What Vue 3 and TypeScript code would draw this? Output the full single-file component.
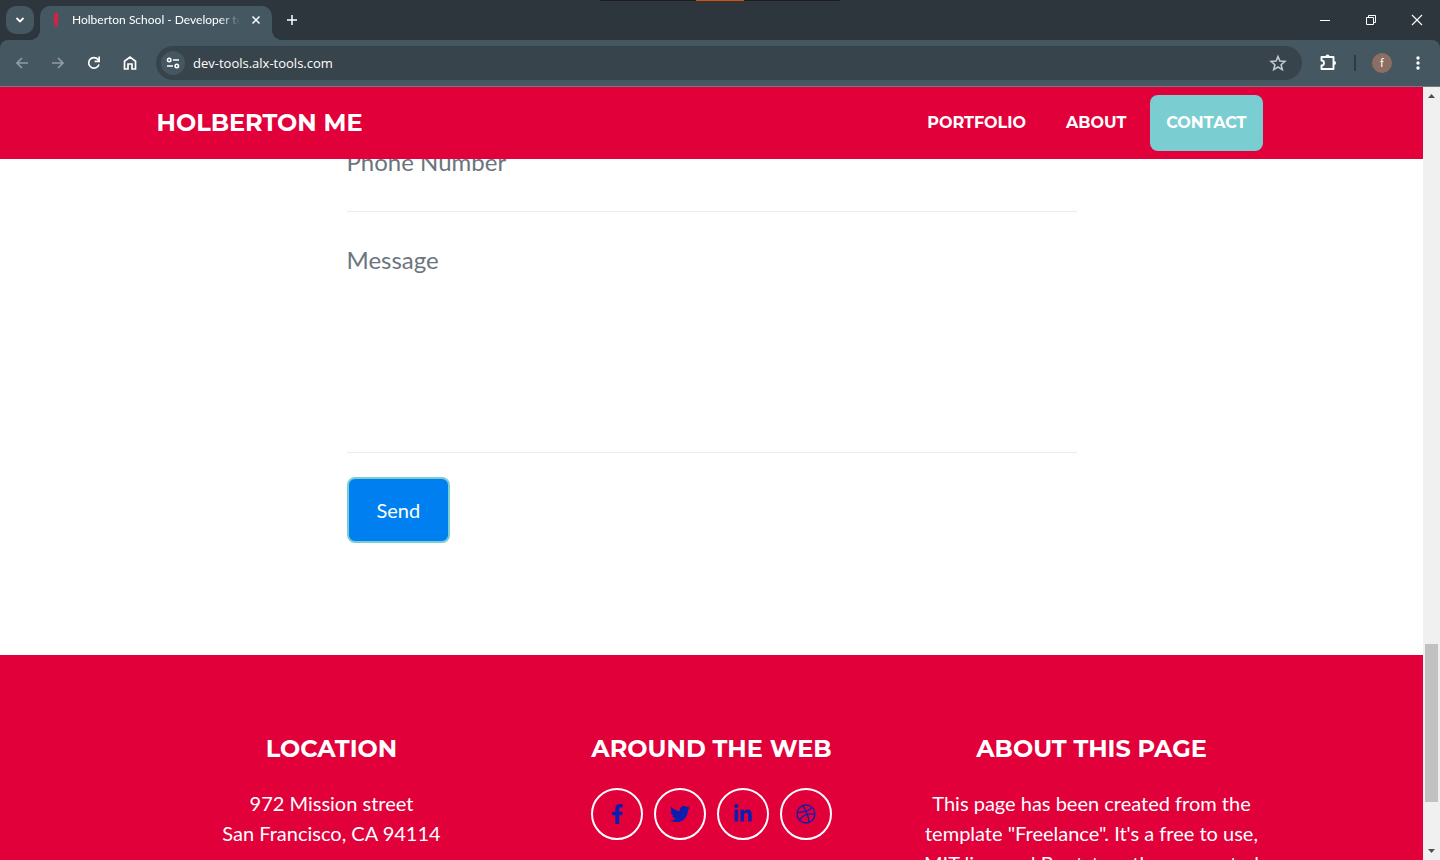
<script setup lang="ts">
import { ref } from 'vue'

interface NavItem { label: string; href: string; active: boolean }
interface Social { name: string; viewBox: string; width: number; path: string }

const navItems: NavItem[] = [
  { label: 'Portfolio', href: '#portfolio', active: false },
  { label: 'About', href: '#about', active: false },
  { label: 'Contact', href: '#contact', active: true },
]

const socials: Social[] = [
  {
    name: 'Facebook',
    viewBox: '0 0 320 512',
    width: 13,
    path: 'M279.14 288l14.22-92.66h-88.91v-60.13c0-25.35 12.42-50.06 52.24-50.06h40.42V6.26S260.43 0 225.36 0c-73.22 0-121.08 44.38-121.08 124.72v70.62H22.89V288h81.39v224h100.17V288z',
  },
  {
    name: 'Twitter',
    viewBox: '0 0 512 512',
    width: 20,
    path: 'M459.37 151.716c.325 4.548.325 9.097.325 13.645 0 138.72-105.583 298.558-298.558 298.558-59.452 0-114.68-17.219-161.137-47.106 8.447.974 16.568 1.299 25.34 1.299 49.055 0 94.213-16.568 130.274-44.832-46.132-.975-84.792-31.188-98.112-72.772 6.498.974 12.995 1.624 19.818 1.624 9.421 0 18.843-1.3 27.614-3.573-48.081-9.747-84.143-51.98-84.143-102.985v-1.299c13.969 7.797 30.214 12.67 47.431 13.319-28.264-18.843-46.781-51.005-46.781-87.391 0-19.492 5.197-37.36 14.294-52.954 51.655 63.675 129.3 105.258 216.365 109.807-1.624-7.797-2.599-15.918-2.599-24.04 0-57.828 46.782-104.934 104.934-104.934 30.213 0 57.502 12.67 76.67 33.137 23.715-4.548 46.456-13.32 66.599-25.34-7.798 24.366-24.366 44.833-46.132 57.827 21.117-2.273 41.584-8.122 60.426-16.243-14.292 20.791-32.161 39.308-52.628 54.253z',
  },
  {
    name: 'LinkedIn',
    viewBox: '0 0 448 512',
    width: 18,
    path: 'M100.28 448H7.4V148.9h92.88zM53.79 108.1C24.09 108.1 0 83.5 0 53.8a53.79 53.79 0 0 1 107.58 0c0 29.7-24.1 54.3-53.79 54.3zM447.9 448h-92.68V302.4c0-34.7-.7-79.2-48.29-79.2-48.29 0-55.69 37.7-55.69 76.7V448h-92.78V148.9h89.08v40.8h1.3c12.4-23.5 42.69-48.3 87.88-48.3 94 0 111.28 61.9 111.28 142.3V448z',
  },
]

const address = ref('dev-tools.alx-tools.com')
const phone = ref('')
const message = ref('')
</script>

<template>
  <div class="window">
    <header class="chrome">
      <div class="tabstrip">
        <button class="tab-search" aria-label="Search tabs">
          <svg width="10" height="10" viewBox="0 0 10 10"><path d="M1.5 3l3.5 3.5L8.5 3" fill="none" stroke="#fff" stroke-width="1.800" /></svg>
        </button>
        <div class="tab">
          <svg class="favicon" width="8" height="16" viewBox="0 0 8 16" aria-hidden="true">
            <path d="M3.500 1L5.200.6 6.200 2.500 5.800 4.600 4.600 5.400 6.200 7 6 9.200 4.600 10.400 6 11.600 5.800 13.800 4 15 2 14 2.200 12.600 3.800 13.400 4.300 12.300 2.800 11.200 2.800 10 1.200 9.400 2.500 8.600 1.400 7.200 2.800 6.600 3 5 1 4.200 3.200 3z" fill="#ee1840" />
          </svg>
          <span class="tab-title">Holberton School - Developer tools</span>
          <button class="tab-close" aria-label="Close tab">
            <svg width="10" height="10" viewBox="0 0 10 10"><path d="M1.5 1.5l7 7m0-7l-7 7" stroke="#fff" stroke-width="1.5" /></svg>
          </button>
        </div>
        <button class="new-tab" aria-label="New tab">
          <svg width="12" height="12" viewBox="0 0 12 12"><path d="M6 1v10M1 6h10" stroke="#fff" stroke-width="1.5" /></svg>
        </button>
        <div class="progress" aria-hidden="true"><span class="progress-mark"></span></div>
        <div class="window-controls">
          <button aria-label="Minimize"><svg width="12" height="12" viewBox="0 0 12 12"><path d="M1 6.5h10" stroke="#fff" /></svg></button>
          <button aria-label="Restore"><svg width="12" height="12" viewBox="0 0 12 12"><path d="M1.5 3.5h7v7h-7zM3.5 3V1.5h7v7H9" fill="none" stroke="#fff" /></svg></button>
          <button aria-label="Close"><svg width="12" height="12" viewBox="0 0 12 12"><path d="M1 1l10 10M11 1L1 11" stroke="#fff" stroke-width="1.1" /></svg></button>
        </div>
      </div>

      <div class="toolbar">
        <button class="tool" aria-label="Back" disabled>
          <svg width="14" height="14" viewBox="0 0 14 14"><path d="M13 7H2M7 2L2 7l5 5" fill="none" stroke="#929da2" stroke-width="1.7" /></svg>
        </button>
        <button class="tool" aria-label="Forward" disabled>
          <svg width="14" height="14" viewBox="0 0 14 14"><path d="M1 7h11M7 2l5 5-5 5" fill="none" stroke="#929da2" stroke-width="1.7" /></svg>
        </button>
        <button class="tool" aria-label="Reload">
          <svg width="14" height="14" viewBox="0 0 14 14"><path d="M12 8.5A5.3 5.3 0 1 1 11 3.4L12.2 5" fill="none" stroke="#fff" stroke-width="1.7" /><path d="M13 .5v5.700H7.600V4.600h3.700V.5z" fill="#fff" /></svg>
        </button>
        <button class="tool" aria-label="Home">
          <svg width="14" height="16" viewBox="0 0 14 16"><path d="M1.5 6.2L7 2l5.500 4.200V14H9V9H5v5H1.500z" fill="none" stroke="#fff" stroke-width="1.7" /></svg>
        </button>
        <div class="omnibox">
          <button class="site-info" aria-label="View site information">
            <svg width="14" height="12" viewBox="0 0 14 12" fill="none" stroke="#fff" stroke-width="1.6"><circle cx="3.200" cy="3" r="1.700" /><path d="M7 3h6M1 9h6" /><circle cx="10.800" cy="9" r="1.700" /></svg>
          </button>
          <input v-model="address" class="address" type="text" aria-label="Address" />
          <button class="bookmark" aria-label="Bookmark this tab">
            <svg width="18" height="18" viewBox="0 0 18 18"><path d="M9 2.500l1.900 4.600 5 .4-3.800 3.200 1.200 4.900L9 13l-4.300 2.600 1.200-4.900-3.800-3.200 5-.4z" fill="none" stroke="#c3c7ca" stroke-width="1.600" /></svg>
          </button>
        </div>
        <button class="tool extensions" aria-label="Extensions">
          <svg width="18" height="18" viewBox="0 0 18 18"><path d="M2.500 3h12v12h-12v-3.500a2.500 2.500 0 0 0 0-5z" fill="none" stroke="#fff" stroke-width="1.900" stroke-linejoin="round" /><path d="M6.500 2.500a2 2 0 0 1 4 0M15 7a2 2 0 0 1 0 4" fill="#fff" /></svg>
        </button>
        <span class="divider"></span>
        <button class="profile" aria-label="Profile">f</button>
        <button class="tool menu" aria-label="Menu">
          <svg width="4" height="16" viewBox="0 0 4 16" fill="#fff"><circle cx="2" cy="3" r="1.700" /><circle cx="2" cy="8" r="1.700" /><circle cx="2" cy="13" r="1.700" /></svg>
        </button>
      </div>
    </header>

    <div class="viewport">
      <div class="page">
        <nav class="navbar">
          <div class="container navbar-inner">
            <a class="brand" href="#top">Holberton Me</a>
            <div class="nav-links">
              <a v-for="item in navItems" :key="item.label" :href="item.href" :class="['nav-link', { active: item.active }]">{{ item.label }}</a>
            </div>
          </div>
        </nav>

        <main class="contact">
          <form class="contact-form" @submit.prevent>
            <input v-model="phone" class="field" type="tel" placeholder="Phone Number" aria-label="Phone Number" />
            <textarea v-model="message" class="field message" placeholder="Message" aria-label="Message"></textarea>
            <button class="send" type="submit">Send</button>
          </form>
        </main>

        <footer class="footer">
          <div class="container columns">
            <section class="column">
              <h4>Location</h4>
              <p>972 Mission street<br />San Francisco, CA 94114</p>
            </section>
            <section class="column">
              <h4>Around the Web</h4>
              <div class="socials">
                <a v-for="s in socials" :key="s.name" class="social" href="#" :aria-label="s.name">
                  <svg :width="s.width" height="20" :viewBox="s.viewBox"><path :d="s.path" fill="currentColor" /></svg>
                </a>
                <a class="social" href="#" aria-label="Dribbble">
                  <svg width="20" height="20" viewBox="0 0 20 20" fill="none" stroke="currentColor" stroke-width="1.300"><circle cx="10" cy="10" r="9" /><path d="M6.600 1.700C9.500 5.500 11.800 10 13.300 18.300M1.200 8.300c6 .1 11.800-.9 14.900-4.900M3.700 16.200c3.200-5.200 8.500-7.400 15.200-5.700" /></svg>
                </a>
              </div>
            </section>
            <section class="column">
              <h4>About this page</h4>
              <p>This page has been created from the template "Freelance". It's a free to use, MIT licensed Bootstrap theme created</p>
            </section>
          </div>
        </footer>
      </div>

      <div class="scrollbar" aria-hidden="true">
        <svg width="17" height="17" viewBox="0 0 17 17"><path d="M5 11l3.500-4 3.500 4z" fill="#505050" /></svg>
        <span class="thumb"></span>
        <svg width="17" height="17" viewBox="0 0 17 17"><path d="M5 6l3.500 4L12 6z" fill="#505050" /></svg>
      </div>
    </div>
  </div>
</template>

<style>
html,
body {
  margin: 0;
  overflow: hidden;
}
</style>

<style scoped>
* {
  box-sizing: border-box;
}

.window {
  display: flex;
  flex-direction: column;
  height: 100vh;
  overflow: hidden;
  font-family: Lato, sans-serif;
  background: #fff;
}

button {
  display: flex;
  align-items: center;
  justify-content: center;
  padding: 0;
  border: 0;
  background: none;
  color: #fff;
}

.chrome {
  background: #2c363c;
  font-family: "Open Sans", sans-serif;
}

.tabstrip {
  position: relative;
  display: flex;
  height: 40px;
  padding: 6px 0 0 6px;
}

.tab-search {
  width: 28px;
  height: 28px;
  margin-right: 6px;
  border-radius: 10px;
  background: #455760;
}

.tab {
  position: relative;
  display: flex;
  align-items: center;
  width: 232px;
  padding: 0 8px 6px 12px;
  border-radius: 10px 10px 0 0;
  background: #455760;
}

.tab::before,
.tab::after {
  content: "";
  position: absolute;
  bottom: 0;
  width: 10px;
  height: 10px;
}

.tab::before {
  left: -10px;
  background: radial-gradient(circle at 0 0, transparent 10px, #455760 10px);
}

.tab::after {
  right: -10px;
  background: radial-gradient(circle at 100% 0, transparent 10px, #455760 10px);
}

.tab-title {
  flex: 1;
  margin-left: 12px;
  overflow: hidden;
  white-space: nowrap;
  font-family: Lato, sans-serif;
  font-size: 12px;
  line-height: 16px;
  color: #fff;
  mask-image: linear-gradient(to right, #000 88%, transparent);
}

.tab-close {
  width: 16px;
  height: 16px;
  margin-left: 8px;
}

.new-tab {
  width: 28px;
  height: 28px;
  margin-left: 6px;
}

.progress {
  position: absolute;
  top: 0;
  left: 50%;
  display: flex;
  justify-content: center;
  width: 240px;
  height: 1px;
  margin-left: -120px;
  background: #1f1c1b;
}

.progress-mark {
  width: 48px;
  background: #d1500f;
}

.window-controls {
  display: flex;
  margin: -6px 0 0 auto;
}

.window-controls button {
  width: 46px;
  height: 40px;
}

.toolbar {
  display: flex;
  align-items: center;
  height: 47px;
  padding: 0 4px;
  border-bottom: 1px solid #6f7d84;
  border-radius: 8px 8px 0 0;
  background: #455760;
}

.tool {
  width: 36px;
  height: 34px;
}

.omnibox {
  display: flex;
  flex: 1;
  align-items: center;
  height: 34px;
  margin: 0 8px;
  padding: 0 15px 0 5px;
  border-radius: 17px;
  background: #38444b;
}

.site-info {
  width: 24px;
  height: 24px;
  border-radius: 12px;
  background: #455760;
}

.address {
  flex: 1;
  height: 24px;
  margin-left: 8px;
  padding: 0;
  border: 0;
  outline: 0;
  background: none;
  color: #fff;
  font: 13px "Open Sans", sans-serif;
}

.divider {
  width: 2px;
  height: 16px;
  margin: 0 16px 0 8px;
  background: #2f3b42;
}

.profile {
  width: 20px;
  height: 20px;
  border-radius: 10px;
  background: #8d6e63;
  font: 11px Roboto, sans-serif;
}

.menu {
  margin-left: 8px;
}

.viewport {
  display: flex;
  flex: 1;
  min-height: 0;
}

.page {
  flex: 1;
  min-width: 0;
  overflow: hidden;
}

.container {
  max-width: 1140px;
  margin: 0 auto;
}

.navbar {
  position: relative;
  z-index: 1;
  padding: 8px 0;
  background: #e1003a;
}

.navbar-inner {
  display: flex;
  align-items: center;
  justify-content: space-between;
  padding: 0 15px;
}

.brand,
.nav-link,
h4 {
  font-family: Montserrat, Inter, sans-serif;
  font-weight: 700;
  text-transform: uppercase;
  color: #fff;
}

.brand {
  font-size: 24px;
  line-height: 36px;
  text-decoration: none;
}

.nav-links {
  display: flex;
  gap: 8px;
  padding-right: 4px;
}

.nav-link {
  padding: 16px;
  border-radius: 8px;
  font-size: 16px;
  line-height: 24px;
  text-decoration: none;
}

.nav-link.active {
  background: #7acdd1;
}

.contact {
  max-width: 760px;
  margin: -16px auto 0;
  padding: 0 15px 112px;
}

.contact-form {
  display: flex;
  flex-direction: column;
  align-items: flex-start;
}

.field {
  width: 100%;
  height: 69px;
  padding: 0 0 32px;
  border: 0;
  border-bottom: 1px solid #e9ebed;
  outline: 0;
  background: none;
  font-family: Lato, sans-serif;
  font-size: 24px;
  line-height: 36px;
  color: #212529;
}

.field::placeholder {
  color: #6c757d;
  opacity: 1;
}

.message {
  height: 211px;
  margin: 30px 0 24px;
  resize: none;
}

.send {
  padding: 16px 28px;
  border: 2px solid #7acdd1;
  border-radius: 8px;
  background: #0080f0;
  font: 20px/30px Lato, sans-serif;
}

.footer {
  padding: 80px 0;
  background: #e1003a;
  color: #fff;
  text-align: center;
}

.columns {
  display: grid;
  grid-template-columns: repeat(3, 1fr);
}

.column {
  padding: 0 15px;
}

h4 {
  margin: 0 0 25px;
  font-size: 24px;
  line-height: 28px;
}

p {
  margin: 0;
  font-size: 20px;
  line-height: 30px;
}

.socials {
  display: flex;
  justify-content: center;
  gap: 11px;
}

.social {
  display: flex;
  align-items: center;
  justify-content: center;
  width: 52px;
  height: 52px;
  border: 2px solid #fff;
  border-radius: 50%;
  color: #0a1fb0;
}

.scrollbar {
  display: grid;
  grid-template-rows: 17px 540fr 158fr 41fr 17px;
  width: 17px;
  background: #f0f0f0;
}

.thumb {
  grid-row: 3;
  margin: 0 2px;
  background: #c1c1c1;
}

.scrollbar svg:last-child {
  grid-row: 5;
}
</style>
